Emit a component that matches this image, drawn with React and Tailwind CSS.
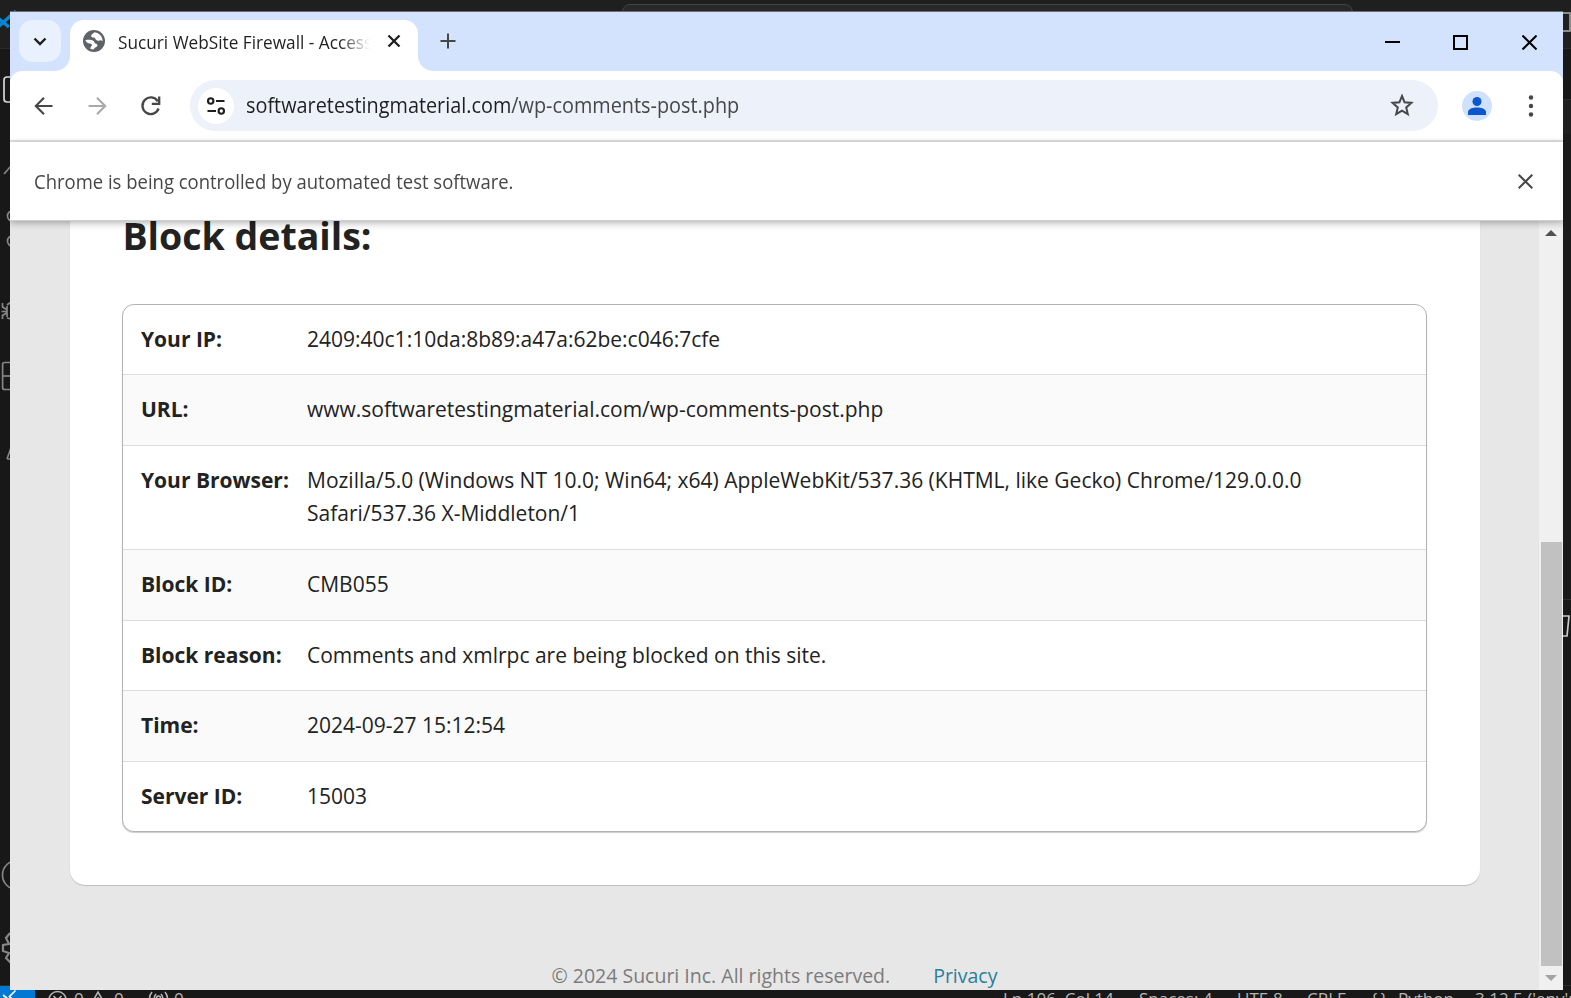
const rows = [
  ["Your IP:", "2409:40c1:10da:8b89:a47a:62be:c046:7cfe"],
  ["URL:", "www.softwaretestingmaterial.com/wp-comments-post.php"],
  [
    "Your Browser:",
    "Mozilla/5.0 (Windows NT 10.0; Win64; x64) AppleWebKit/537.36 (KHTML, like Gecko) Chrome/129.0.0.0 Safari/537.36 X-Middleton/1",
  ],
  ["Block ID:", "CMB055"],
  ["Block reason:", "Comments and xmlrpc are being blocked on this site."],
  ["Time:", "2024-09-27 15:12:54"],
  ["Server ID:", "15003"],
];

function Icon({ size, className = "", children, width = 2, ...rest }) {
  return (
    <svg
      width={size}
      height={size}
      viewBox={`0 0 ${size} ${size}`}
      fill="none"
      stroke="currentColor"
      strokeWidth={width}
      className={`shrink-0 ${className}`}
      {...rest}
    >
      {children}
    </svg>
  );
}

function ActivityBar() {
  return (
    <svg width="60" height="936" viewBox="0 49 60 936" fill="none" stroke="#868686" strokeWidth="1.7" className="shrink-0">
      <rect x="4" y="77" width="24" height="25" rx="3" stroke="#d7d7d7" />
      <path d="M4 174l7-8" />
      <circle cx="13" cy="216" r="5.5" />
      <circle cx="13" cy="241" r="5.5" />
      <path d="M2.500 303v4l4 2.500M1.500 311.500H7M2.500 319v-3.500l4-2.500M7 305l4-3M7 318l4 1M7 306v11" />
      <rect x="2.6" y="362.500" width="24" height="27" rx="2" />
      <path d="M3 376h16" />
      <path d="M7 459l5-14M7 459h8" />
      <circle cx="17" cy="875" r="14.500" />
      <path d="M10 933l-4 5 3 6-6 1v6l6 2-3 5 5 5" strokeWidth="2.200" />
    </svg>
  );
}

function Editor() {
  return (
    <div className="absolute inset-0 flex flex-col overflow-hidden bg-[#181818] text-[17px] text-[#b5b5b5]">
      <div className="flex h-[49px] shrink-0 items-start border-b border-[#2b2b2b] bg-[#1f1f1f]">
        <svg width="24" height="48" viewBox="0 0 24 48" fill="none" stroke="#0a86d1" strokeWidth="3.500">
          <path d="M-2 18l11 9M-2 27L16 11" />
        </svg>
        <div className="mt-1 ml-[598px] h-10 w-[731px] shrink-0 rounded-lg border border-[#444] bg-[#282828]" />
        <div className="mt-3 ml-auto h-5 w-[14px] border-2 border-[#8a8a8a]" />
      </div>
      <div className="flex min-h-0 flex-1 justify-between">
        <ActivityBar />
        <div className="flex w-[10px] flex-col">
          <div className="h-[51px] shrink-0 border-b border-[#2b2b2b]" />
          <div className="h-[34px] shrink-0 bg-[#1f1f1f]" />
          <div className="h-[466px] shrink-0 border-b border-[#303030] bg-[#1b1b1b]" />
          <svg width="10" height="60" viewBox="0 600 10 60" fill="none" stroke="#c9c9c9" strokeWidth="1.700" className="shrink-0">
            <path d="M0 616h8l-2 20H0" />
          </svg>
        </div>
      </div>
      <div className="flex h-[13px] shrink-0 items-start border-t border-[#2b2b2b] leading-[24px]">
        <div className="flex h-full w-[35px] shrink-0 justify-start bg-[#0078d4] text-white">
          <svg width="20" height="12" viewBox="0 0 20 12" fill="none" stroke="currentColor" strokeWidth="1.700">
            <path d="M3 9l5 4M15.500 4.500L9.500 10.500l4 4" />
          </svg>
        </div>
        <svg width="39" height="12" viewBox="0 0 39 12" fill="none" stroke="currentColor" strokeWidth="1.600" className="shrink-0">
          <circle cx="22.500" cy="14" r="8.500" />
          <path d="M18.500 10l8 8M26.500 10l-8 8" />
        </svg>
        <span className="w-[15px] shrink-0 pt-[1px]">0</span>
        <svg width="25" height="12" viewBox="0 0 25 12" fill="none" stroke="currentColor" strokeWidth="1.600" className="shrink-0">
          <path d="M1 20L9 6l8 14M9 11v6" />
        </svg>
        <span className="w-[33px] shrink-0 pt-[1px]">0</span>
        <svg width="27" height="12" viewBox="0 0 27 12" fill="none" stroke="currentColor" strokeWidth="1.600" className="shrink-0">
          <path d="M5 6a11 11 0 0 0 0 14M9 8a8 8 0 0 0 0 10M18 6a11 11 0 0 1 0 14M14 8a8 8 0 0 1 0 10" />
          <circle cx="11.500" cy="12" r="2" />
        </svg>
        <span className="w-[829px] shrink-0 pt-[1px]">0</span>
        <span className="w-[136px] shrink-0 pt-[1px]">Ln 106, Col 14</span>
        <span className="w-[98px] shrink-0 pt-[1px]">Spaces: 4</span>
        <span className="w-[70px] shrink-0 pt-[1px]">UTF-8</span>
        <span className="w-[64px] shrink-0 pt-[1px]">CRLF</span>
        <span className="w-[27px] shrink-0 pt-[1px] tracking-[3px]">{"{}"}</span>
        <span className="w-[77px] shrink-0 pt-[1px]">Python</span>
        <span className="shrink-0 pt-[1px] whitespace-nowrap">3.12.5 ('env': venv)</span>
      </div>
    </div>
  );
}

function TabStrip() {
  return (
    <div className="flex h-[59px] shrink-0 bg-[#d3e3fd] pt-2">
      <div className="ml-[9px] flex size-[42px] shrink-0 items-center justify-center rounded-[14px] bg-[#e9f1ff]">
        <Icon size={14} width={2.4} className="text-[#1f1f1f]">
          <path d="M1.500 4.500L7 10l5.500-5.500" />
        </Icon>
      </div>
      <div className="h-full w-[9px] self-end">
        <svg width="15" height="15" viewBox="0 0 15 15" className="mt-9 -ml-[6px]">
          <path d="M15 0v15H0A15 15 0 0 0 15 0z" fill="#fff" />
        </svg>
      </div>
      <div className="flex w-[348px] shrink-0 items-center rounded-t-[14px] bg-white pb-[7px] pl-[13px]">
        <svg width="22" height="22" viewBox="0 0 22 22" className="-mt-[3px] shrink-0">
          <circle cx="11" cy="11" r="11" fill="#5f6368" />
          <path
            d="M11.500 2.200C10 3.600 8.300 4 8.200 5.800c0 1.500 1.300 1.700 2.800 1.800 1 .1 1.200 1.200 2 2.200.9 1 2.300 1.300 3.700.7 1-.4 1.600-.2 2.900.9.3-3.900-2.400-8.200-8.100-9.200z"
            fill="#fff"
          />
          <path
            d="M2.300 10.200c2.300-.6 5.700-.7 7.600.4 1.800 1 1.200 2.500 2.500 3 1.300.5 2.100.6 2 2-.1 1.600-2.200 1.500-2.800 2.500-.5.800-.6 1.300-1.400 1.500-1.100 0-2-.4-2.900-.8.2-1.500.6-2.300 1.600-3 .2-1.600-.7-2.300-2.300-2.300-1.700 0-3-.9-4.300-3.300z"
            fill="#fff"
          />
        </svg>
        <div className="-mt-px ml-[13px] w-[252px] overflow-hidden">
          <div className="w-[278px] origin-left scale-x-[0.906] overflow-hidden bg-linear-to-r from-[#1f1f1f] from-88% to-transparent to-100% bg-clip-text text-[19px] leading-7 whitespace-nowrap text-transparent">
            Sucuri WebSite Firewall - Access Denied
          </div>
        </div>
        <Icon size={14} width={2.3} className="-mt-[3px] ml-[17px] text-[#1f1f1f]">
          <path d="M1.500 1.500l11 11M12.500 1.500l-11 11" />
        </Icon>
      </div>
      <svg width="15" height="15" viewBox="0 0 15 15" className="mt-9 shrink-0">
        <path d="M0 0v15h15A15 15 0 0 1 0 0z" fill="#fff" />
      </svg>
      <Icon size={16} width={2} className="mt-[13px] ml-[7px] text-[#474747]">
        <path d="M8 0.500v15M0.500 8h15" />
      </Icon>
      <div className="ml-auto flex h-[44px] items-center gap-[53px] pr-[26px] text-black">
        <Icon size={15} width={2}>
          <path d="M0 7h15" />
        </Icon>
        <Icon size={15} width={2}>
          <path d="M1 1h13v13H1z" />
        </Icon>
        <Icon size={15} width={2} className="ml-px">
          <path d="M0.500 0.500l14 14M14.500 0.500l-14 14" />
        </Icon>
      </div>
    </div>
  );
}

function Toolbar() {
  return (
    <div className="bg-[#d3e3fd]">
      <div className="flex h-[71px] items-center rounded-t-[12px] border-b-2 border-[#e0e2e2] bg-white text-[#474747]">
        <Icon size={20} width={2.1} className="ml-[23.5px]">
          <path d="M18.500 10H2M10 1.800L1.800 10l8.200 8.200" />
        </Icon>
        <Icon size={20} width={2.1} className="ml-[33px] text-[#a9a9a9]">
          <path d="M1.500 10H18M10 1.800l8.200 8.200-8.200 8.200" />
        </Icon>
        <Icon size={22} width={2.3} className="ml-[33px]">
          <path d="M18.600 13.500A8.300 8.300 0 1 1 17.800 6.300M19.200 1.500v7.300h-7.400" />
        </Icon>
        <div className="ml-[28.5px] flex h-[51px] w-[1248px] items-center rounded-full bg-[#ecf1fa]">
          <div className="ml-2 flex size-9 shrink-0 items-center justify-center rounded-full bg-white">
            <Icon size={20} width={2.1} className="text-[#1f1f1f]">
              <circle cx="4.700" cy="5" r="2.700" />
              <circle cx="15.300" cy="15" r="2.700" />
              <path d="M10 5h8.500M1.500 15h8.500" />
            </Icon>
          </div>
          <div className="mb-[2px] ml-3 origin-left scale-x-[0.945] text-[21px] leading-8 text-[#1f1f1f]">
            softwaretestingmaterial.com<span className="text-[#474747]">/wp-comments-post.php</span>
          </div>
          <Icon size={24} width={2} className="mr-6 mb-[1px] ml-auto">
            <path d="M12 3l2.600 6.300 6.800.6-5.200 4.500 1.600 6.700-5.800-3.500-5.800 3.500 1.600-6.700-5.200-4.500 6.800-.6z" />
          </Icon>
        </div>
        <div className="ml-6 flex size-[30px] shrink-0 items-center justify-center rounded-full bg-[#cfe1fd]">
          <svg width="18" height="18" viewBox="0 0 18 18" fill="#0b57d0">
            <circle cx="9" cy="4.500" r="4.500" />
            <path d="M0 15c0-3.200 5-4.600 9-4.600s9 1.400 9 4.600v3H0z" />
          </svg>
        </div>
        <svg width="6" height="22" viewBox="0 0 6 22" fill="currentColor" className="ml-[36px] shrink-0">
          <circle cx="3" cy="2.500" r="2.200" />
          <circle cx="3" cy="11" r="2.200" />
          <circle cx="3" cy="19.500" r="2.200" />
        </svg>
      </div>
    </div>
  );
}

function Infobar() {
  return (
    <div className="relative z-10 flex h-[79px] shrink-0 items-center justify-between border-b border-[#ccd0d0] bg-white pr-[30.5px] pl-6 text-[#474747] shadow-[0_2px_7px_rgba(0,0,0,0.3)]">
      <span className="mt-[1px] origin-left scale-x-[0.924] text-[20px]">
        Chrome is being controlled by automated test software.
      </span>
      <Icon size={15} width={2}>
        <path d="M0.700 0.700l13.600 13.600M14.300 0.700L0.700 14.300" />
      </Icon>
    </div>
  );
}

function BlockDetails() {
  return (
    <div className="min-w-0 flex-1 px-[60px] text-[#222]">
      <div className="-mt-[13px] h-[677px] w-[1410px] rounded-b-[15px] bg-white pr-[53px] pl-[52px] shadow-[0_1px_1px_rgba(0,0,0,0.18)]">
        <h2 className="pl-[0.4px] text-[37.5px] leading-[56px] font-bold">Block details:</h2>
        <div className="mt-[39.600px] overflow-hidden rounded-xl border border-[#b3b3b3] bg-white shadow-[0_1px_1px_rgba(0,0,0,0.2)]">
          {rows.map(([label, value]) => (
            <div
              key={label}
              className="flex border-b border-[#ddd] py-[18px] text-[21px] leading-[33.600px] last:border-b-0 even:bg-[#fafafa]"
            >
              <div className="w-[184px] shrink-0 pl-[18px] font-bold">{label}</div>
              <div className="w-[1040px]">{value}</div>
            </div>
          ))}
        </div>
      </div>
      <div className="mt-[73px] flex justify-center gap-[43px] text-[19.5px] leading-9 text-[#7b7b7b]">
        <span>© 2024 Sucuri Inc. All rights reserved.</span>
        <a className="text-[#2a7f9c]">Privacy</a>
      </div>
    </div>
  );
}

function Scrollbar() {
  return (
    <div className="flex w-6 shrink-0 flex-col items-center bg-[#f0f0f0]">
      <svg width="12" height="6" viewBox="0 0 12 6" className="mt-[9px]">
        <path d="M0 6l6-6 6 6z" fill="#505050" />
      </svg>
      <div className="mt-[306px] h-[424px] w-[21px] bg-[#c1c1c1]" />
      <svg width="12" height="6" viewBox="0 0 12 6" className="mt-[9px]">
        <path d="M0 0h12L6 6z" fill="#a3a3a3" />
      </svg>
    </div>
  );
}

export default function App() {
  return (
    <div className="relative h-[998px] w-[1571px] overflow-hidden font-['Open_Sans','Noto_Sans',sans-serif]">
      <Editor />
      <div className="absolute top-[11px] left-[10px] flex h-[979px] w-[1553px] flex-col overflow-hidden border-t border-[#6b7075] bg-white">
        <TabStrip />
        <Toolbar />
        <Infobar />
        <div className="flex min-h-0 flex-1 overflow-hidden bg-[#e7e7e7]">
          <BlockDetails />
          <Scrollbar />
        </div>
      </div>
    </div>
  );
}
